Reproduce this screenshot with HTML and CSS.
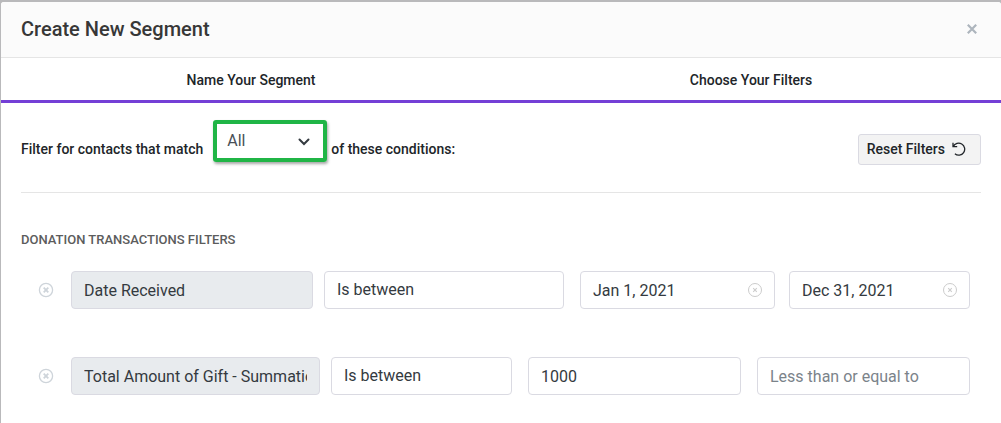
FILE: index.html
```html
<!DOCTYPE html>
<html lang="en">
<head>
    <meta charset="UTF-8">
    <meta name="viewport" content="width=device-width, initial-scale=1.0">
    <title>Create New Segment</title>
    <link rel="stylesheet" href="styles.css">
</head>
<body>
    <!-- Shared icons -->
    <svg class="sprite" aria-hidden="true">
        <symbol id="icon-remove" viewBox="0 0 16 16">
            <circle cx="8" cy="8" r="6.6" fill="none" stroke="currentColor" stroke-width="1.3"/>
            <path d="M5.7 5.7l4.6 4.6M10.3 5.7l-4.6 4.6" fill="none" stroke="currentColor" stroke-width="1.8"/>
        </symbol>
        <symbol id="icon-clear" viewBox="0 0 16 16">
            <circle cx="8" cy="8" r="6.5" fill="none" stroke="currentColor" stroke-width="1"/>
            <path d="M6.2 6.2l3.6 3.6M9.8 6.2l-3.6 3.6" fill="none" stroke="currentColor" stroke-width="1.1"/>
        </symbol>
    </svg>

    <div class="modal">
        <header class="modal-header">
            <h1>Create New Segment</h1>
            <button type="button" class="icon-btn close-btn" aria-label="Close">
                <svg width="10" height="10" viewBox="0 0 10 10"><path d="M.8.8l8.4 8.4M9.2.8L.8 9.2" fill="none" stroke="currentColor" stroke-width="2.2"/></svg>
            </button>
        </header>

        <!-- Steps -->
        <nav class="steps">
            <a href="#name">Name Your Segment</a>
            <a href="#filters">Choose Your Filters</a>
        </nav>

        <div class="modal-body" id="filters">
            <div class="match-bar">
                <label for="match">Filter for contacts that match</label>
                <div class="match-select">
                    <select id="match">
                        <option>All</option>
                        <option>Any</option>
                    </select>
                    <svg class="chevron" width="12" height="8" viewBox="0 0 12 8"><path d="M1.5 1.5L6 6l4.5-4.5" fill="none" stroke="currentColor" stroke-width="2" stroke-linecap="round"/></svg>
                </div>
                <span>of these conditions:</span>
                <button type="button" class="reset-btn">
                    Reset Filters
                    <svg width="14" height="14" viewBox="0 0 14 14"><path d="M1 .7v4h4.2M1.3 4.5A6 6 0 1 1 2.9 11.8" fill="none" stroke="currentColor" stroke-width="1.3"/></svg>
                </button>
            </div>

            <h2>Donation Transactions Filters</h2>

            <!-- Date filter -->
            <div class="filter-row dates">
                <button type="button" class="icon-btn remove-btn" aria-label="Remove filter"><svg width="16" height="16"><use href="#icon-remove"/></svg></button>
                <input type="text" class="field name" value="Date Received" aria-label="Filter" readonly>
                <select class="field" aria-label="Condition">
                    <option>Is between</option>
                </select>
                <div class="values">
                    <div class="date">
                        <input type="text" class="field" value="Jan 1, 2021" aria-label="From date">
                        <button type="button" class="icon-btn clear-btn" aria-label="Clear date"><svg width="16" height="16"><use href="#icon-clear"/></svg></button>
                    </div>
                    <div class="date">
                        <input type="text" class="field" value="Dec 31, 2021" aria-label="To date">
                        <button type="button" class="icon-btn clear-btn" aria-label="Clear date"><svg width="16" height="16"><use href="#icon-clear"/></svg></button>
                    </div>
                </div>
            </div>

            <!-- Amount filter -->
            <div class="filter-row amounts">
                <button type="button" class="icon-btn remove-btn" aria-label="Remove filter"><svg width="16" height="16"><use href="#icon-remove"/></svg></button>
                <input type="text" class="field name" value="Total Amount of Gift - Summation" aria-label="Filter" readonly>
                <select class="field" aria-label="Condition">
                    <option>Is between</option>
                </select>
                <div class="values">
                    <input type="text" class="field" value="1000" aria-label="Greater than or equal to">
                    <input type="text" class="field" placeholder="Less than or equal to" aria-label="Less than or equal to">
                </div>
            </div>
        </div>
    </div>
</body>
</html>
```

FILE: styles.css
```css
* {
    margin: 0;
    padding: 0;
    box-sizing: border-box;
}

body {
    min-height: 100vh;
    padding: 2px 0 0 1px;
    background: #b9b9bb;
    color: #212529;
    font-family: Roboto, sans-serif;
    font-size: 14px;
    line-height: 20px;
}

.sprite {
    position: absolute;
    width: 0;
    height: 0;
}

svg {
    display: block;
}

.modal {
    min-height: calc(100vh - 2px);
    background: #fff;
    border-radius: 3px 3px 0 0;
}

/* Header */
.modal-header {
    display: flex;
    justify-content: space-between;
    align-items: center;
    padding: 15px 20px 16px;
    background: #fbfbfb;
    border-bottom: 1px solid #e5e5e5;
    border-radius: 3px 3px 0 0;
}

h1 {
    font-size: 20px;
    font-weight: 500;
    line-height: 24px;
    color: #373737;
}

.icon-btn {
    border: none;
    background: none;
    cursor: pointer;
}

.close-btn {
    padding: 4px;
    color: #adb5bd;
}

/* Steps */
.steps {
    display: flex;
    border-bottom: 3px solid #743fd6;
}

.steps a {
    flex: 1;
    padding: 12px 0 10px;
    text-align: center;
    font-weight: 500;
    color: #212529;
    text-decoration: none;
}

/* Body */
.modal-body {
    padding: 17px 20px 0;
}

.match-bar {
    display: flex;
    align-items: center;
    height: 73px;
    padding-bottom: 14px;
    border-bottom: 1px solid #e5e5e5;
    font-weight: 500;
}

.match-select {
    position: relative;
    align-self: flex-start;
    width: 114px;
    margin: 0 4px 0 10px;
    border: 4px solid #20b546;
    border-radius: 3px;
    box-shadow: 1px 2px 3px rgba(0, 0, 0, 0.35);
}

.match-select select {
    display: block;
    width: 100%;
    height: 34px;
    padding: 0 10px;
    border: none;
    background: #fff;
    appearance: none;
    font: 400 16px/24px Roboto, sans-serif;
    color: #495057;
}

.chevron {
    position: absolute;
    top: 14px;
    right: 13px;
    color: #343a40;
    pointer-events: none;
}

.reset-btn {
    display: flex;
    align-items: center;
    gap: 7px;
    height: 31px;
    margin-left: auto;
    padding: 0 14px 0 8px;
    border: 1px solid #dadae2;
    border-radius: 3px;
    background: #f3f3f3;
    color: #212529;
    font: 500 14px/20px Roboto, sans-serif;
    cursor: pointer;
}

h2 {
    margin: 37px 0 21px;
    font-size: 13px;
    font-weight: 500;
    line-height: 20px;
    text-transform: uppercase;
    color: #5c5c5c;
}

/* Filter rows */
.filter-row {
    display: grid;
    align-items: center;
    column-gap: 11px;
    padding: 0 11px 0 17px;
}

.filter-row + .filter-row {
    margin-top: 48px;
}

.dates {
    grid-template-columns: 22px 242fr 240fr 395fr;
}

.amounts {
    grid-template-columns: 22px 249fr 181fr 447fr;
}

.remove-btn,
.clear-btn {
    width: 16px;
    height: 16px;
}

.remove-btn {
    color: #ced4da;
}

.field {
    width: 100%;
    min-width: 0;
    height: 38px;
    padding: 0 12px;
    border: 1px solid #dadae2;
    border-radius: 4px;
    background: #fff;
    appearance: none;
    font: 400 16px/24px Roboto, sans-serif;
    color: #343a40;
}

.field::placeholder {
    color: #7b838a;
}

.name {
    background: #e8ebee;
}

.values {
    display: grid;
    grid-template-columns: 1fr 1fr;
    gap: 16px;
    margin-left: 5px;
}

.dates .values {
    grid-template-columns: 195fr 181fr;
    gap: 14px;
}

.date {
    position: relative;
}

.clear-btn {
    position: absolute;
    top: 11px;
    right: 12px;
    color: #ccc;
}
```
